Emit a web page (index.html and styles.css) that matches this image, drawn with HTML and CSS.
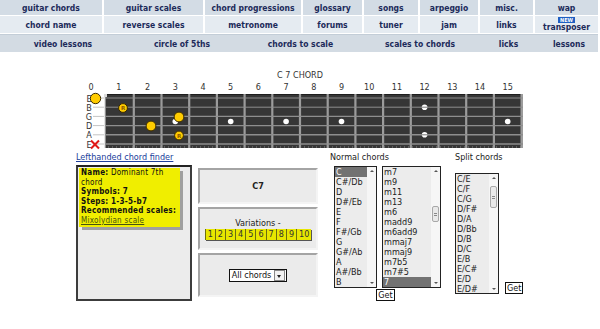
FILE: index.html
```html
<!DOCTYPE html>
<html lang="en">
<head>
    <meta charset="UTF-8">
    <meta name="viewport" content="width=device-width, initial-scale=1.0">
    <title>C 7 chord - chord finder</title>
    <link rel="stylesheet" href="styles.css">
</head>
<body>
    <div class="nav">
        <div class="nav-grid">
            <a href="#">guitar chords</a>
            <a href="#">guitar scales</a>
            <a href="#">chord progressions</a>
            <a href="#">glossary</a>
            <a href="#">songs</a>
            <a href="#">arpeggio</a>
            <a href="#">misc.</a>
            <a href="#">wap</a>
            <a href="#" class="r2">chord name</a>
            <a href="#" class="r2">reverse scales</a>
            <a href="#" class="r2">metronome</a>
            <a href="#" class="r2">forums</a>
            <a href="#" class="r2">tuner</a>
            <a href="#" class="r2">jam</a>
            <a href="#" class="r2">links</a>
            <a href="#" class="r2 stacked"><span class="new">NEW</span>transposer</a>
        </div>
        <div class="nav-row3">
            <a href="#">video lessons</a>
            <a href="#">circle of 5ths</a>
            <a href="#">chords to scale</a>
            <a href="#">scales to chords</a>
            <a href="#">licks</a>
            <a href="#">lessons</a>
        </div>
    </div>

    <div class="chord-title">C 7 CHORD</div>

    <svg class="fretboard" width="600" height="71" viewBox="0 0 600 71">
        <!-- fret numbers -->
        <g class="fret-num">
            <text x="91" y="8.5">0</text>
            <text x="118.9" y="8.5">1</text>
            <text x="147.6" y="8.5">2</text>
            <text x="175.3" y="8.5">3</text>
            <text x="203" y="8.5">4</text>
            <text x="230.7" y="8.5">5</text>
            <text x="258.4" y="8.5">6</text>
            <text x="286.1" y="8.5">7</text>
            <text x="313.8" y="8.5">8</text>
            <text x="341.5" y="8.5">9</text>
            <text x="369.2" y="8.5">10</text>
            <text x="396.9" y="8.5">11</text>
            <text x="424.6" y="8.5">12</text>
            <text x="452.3" y="8.5">13</text>
            <text x="480" y="8.5">14</text>
            <text x="507.7" y="8.5">15</text>
        </g>

        <!-- string names and leads -->
        <g class="string-name">
            <text x="89" y="20.5">E</text>
            <text x="89" y="29.7">B</text>
            <text x="89" y="38.9">G</text>
            <text x="89" y="48.1">D</text>
            <text x="89" y="57.3">A</text>
            <text x="89" y="66.5">E</text>
        </g>
        <g stroke="#c4c4c4" stroke-width="1">
            <line x1="93" y1="17" x2="104" y2="17"/>
            <line x1="93" y1="26.2" x2="104" y2="26.2"/>
            <line x1="93" y1="35.4" x2="104" y2="35.4"/>
            <line x1="93" y1="44.6" x2="104" y2="44.6"/>
            <line x1="93" y1="53.8" x2="104" y2="53.8"/>
            <line x1="93" y1="63" x2="104" y2="63"/>
        </g>

        <!-- board -->
        <rect x="104" y="13" width="419" height="54" fill="#363636"/>
        <line x1="104" y1="13.5" x2="523" y2="13.5" stroke="#1e1e1e"/>
        <line x1="104" y1="66" x2="523" y2="66" stroke="#8a8a8a" stroke-dasharray="1 3"/>
        <rect x="104" y="13" width="1.5" height="54" fill="#e4e4e4"/>
        <rect x="104" y="13" width="3" height="3" fill="#dcdcdc"/>

        <!-- frets -->
        <g fill="#9c9c9c">
            <rect x="132.7" y="13" width="2.2" height="54"/>
            <rect x="160.4" y="13" width="2.2" height="54"/>
            <rect x="188.1" y="13" width="2.2" height="54"/>
            <rect x="215.8" y="13" width="2.2" height="54"/>
            <rect x="243.5" y="13" width="2.2" height="54"/>
            <rect x="271.2" y="13" width="2.2" height="54"/>
            <rect x="298.9" y="13" width="2.2" height="54"/>
            <rect x="326.6" y="13" width="2.2" height="54"/>
            <rect x="354.3" y="13" width="2.2" height="54"/>
            <rect x="382" y="13" width="2.2" height="54"/>
            <rect x="409.7" y="13" width="2.2" height="54"/>
            <rect x="437.4" y="13" width="2.2" height="54"/>
            <rect x="465.1" y="13" width="2.2" height="54"/>
            <rect x="492.8" y="13" width="2.2" height="54"/>
            <rect x="520.5" y="13" width="2.5" height="54"/>
        </g>

        <!-- strings -->
        <g stroke="#8e8e8e">
            <line x1="105" y1="17" x2="523" y2="17" stroke-width="1"/>
            <line x1="105" y1="26.2" x2="523" y2="26.2" stroke-width="1"/>
            <line x1="105" y1="35.4" x2="523" y2="35.4" stroke-width="1.2"/>
            <line x1="105" y1="44.6" x2="523" y2="44.6" stroke-width="1.2"/>
            <line x1="105" y1="53.8" x2="523" y2="53.8" stroke-width="1.4"/>
            <line x1="105" y1="63" x2="523" y2="63" stroke-width="1.4"/>
        </g>

        <!-- inlays -->
        <g fill="#ffffff">
            <circle cx="175.3" cy="40.5" r="2.8"/>
            <circle cx="230.7" cy="40.5" r="2.8"/>
            <circle cx="286.1" cy="40.5" r="2.8"/>
            <circle cx="341.5" cy="40.5" r="2.8"/>
            <circle cx="424.6" cy="26.2" r="2.8"/>
            <circle cx="424.6" cy="53.8" r="2.8"/>
            <circle cx="507.7" cy="40.5" r="2.8"/>
        </g>
        <g stroke="#7a7a7a" stroke-width="1">
            <line x1="421" y1="26.2" x2="428" y2="26.2"/>
            <line x1="421" y1="53.8" x2="428" y2="53.8"/>
        </g>

        <!-- fingering -->
        <g class="finger">
            <circle cx="95.5" cy="17.5" r="5.2"/>
            <circle cx="123" cy="27" r="4.4"/>
            <circle cx="179" cy="36" r="4.9"/>
            <circle cx="151" cy="45" r="4.9"/>
            <circle cx="179" cy="54.5" r="4.4"/>
        </g>
        <g class="root">
            <text x="123" y="29">R</text>
            <text x="179" y="56.5">R</text>
        </g>
        <g stroke="#e01818" stroke-width="2">
            <line x1="91" y1="59.5" x2="99" y2="67.5"/>
            <line x1="99" y1="59.5" x2="91" y2="67.5"/>
        </g>
    </svg>

    <div class="finder">
        <div class="col-info">
            <a href="#" class="lefty">Lefthanded chord finder</a>
            <div class="info-box">
                <div class="note">
                    <b>Name:</b> Dominant 7th<br>
                    chord<br>
                    <b>Symbols: 7</b><br>
                    <b>Steps: 1-3-5-b7</b><br>
                    <b>Recommended scales:</b><br>
                    <a href="#">Mixolydian scale</a>
                </div>
            </div>
        </div>

        <div class="col-mid">
            <div class="panel panel-name">C7</div>
            <div class="panel panel-var">
                <div>Variations -</div>
                <div class="var-list">
                    <span>1</span><span>2</span><span>3</span><span>4</span><span>5</span><span>6</span><span>7</span><span>8</span><span>9</span><span>10</span>
                </div>
            </div>
            <div class="panel panel-filter">
                <span class="fake-select">All chords<span class="drop"></span></span>
            </div>
        </div>

        <div class="col-normal">
            <div class="label">Normal chords</div>
            <div class="lists">
                <div class="listbox root-list">
                    <div class="items">
                        <div class="sel">C</div>
                        <div>C#/Db</div>
                        <div>D</div>
                        <div>D#/Eb</div>
                        <div>E</div>
                        <div>F</div>
                        <div>F#/Gb</div>
                        <div>G</div>
                        <div>G#/Ab</div>
                        <div>A</div>
                        <div>A#/Bb</div>
                        <div>B</div>
                    </div>
                    <div class="sb"><span class="up"></span><span class="down"></span></div>
                </div>
                <div class="listbox type-list">
                    <div class="items">
                        <div>m7</div>
                        <div>m9</div>
                        <div>m11</div>
                        <div>m13</div>
                        <div>m6</div>
                        <div>madd9</div>
                        <div>m6add9</div>
                        <div>mmaj7</div>
                        <div>mmaj9</div>
                        <div>m7b5</div>
                        <div>m7#5</div>
                        <div class="sel">7</div>
                    </div>
                    <div class="sb"><span class="up"></span><span class="thumb thumb-mid"></span><span class="down"></span></div>
                </div>
            </div>
            <button class="get">Get</button>
        </div>

        <div class="col-split">
            <div class="label">Split chords</div>
            <div class="split-row">
                <div class="listbox split-list">
                    <div class="items">
                        <div>C/E</div>
                        <div>C/F</div>
                        <div>C/G</div>
                        <div>D/F#</div>
                        <div>D/A</div>
                        <div>D/Bb</div>
                        <div>D/B</div>
                        <div>D/C</div>
                        <div>E/B</div>
                        <div>E/C#</div>
                        <div>E/D</div>
                        <div>E/D#</div>
                    </div>
                    <div class="sb"><span class="up"></span><span class="thumb thumb-top"></span><span class="down"></span></div>
                </div>
                <button class="get">Get</button>
            </div>
        </div>
    </div>
</body>
</html>
```

FILE: styles.css
```css
body {
    margin: 0;
    background: #fff;
    color: #222;
    font-family: "DejaVu Sans Condensed", "DejaVu Sans", sans-serif;
    font-size: 9px;
}

/* top navigation */
.nav {
    width: 598px;
}
.nav a {
    color: #1c2a5a;
    font-weight: bold;
    font-size: 8.5px;
    text-decoration: none;
    display: flex;
    align-items: center;
    justify-content: center;
    white-space: nowrap;
}
.nav-grid {
    display: grid;
    grid-template-columns: 102px 99px 96px 59px 54px 58px 53px 63px;
    column-gap: 2px;
    row-gap: 1px;
}
.nav-grid a {
    height: 15px;
    background: #d3dce5;
}
.nav-grid a.r2 {
    height: 17px;
    background: #e5ebf1;
}
.nav-grid a.stacked {
    flex-direction: column;
    line-height: 9px;
}
.new {
    background: #1f5fc2;
    color: #fff;
    font-size: 5.5px;
    line-height: 6px;
    padding: 0 2px;
}
.nav-row3 {
    margin-top: 1px;
    display: grid;
    grid-template-columns: 126px 112px 125px 114px 63px 58px;
    background: #d3dbe3;
    border-top: 1px solid #c3cdd7;
}
.nav-row3 a {
    height: 17px;
}

/* fretboard */
.chord-title {
    margin-top: 18px;
    line-height: 11px;
    text-align: center;
    color: #333;
}
.fretboard {
    display: block;
}
.fret-num text,
.string-name text {
    font-family: "DejaVu Sans Condensed", "DejaVu Sans", sans-serif;
    font-size: 9px;
    fill: #333;
    text-anchor: middle;
}
.finger circle {
    fill: #ffcc00;
    stroke: #3a2a00;
    stroke-width: 1;
}
.root text {
    font-family: "DejaVu Sans", sans-serif;
    font-size: 5.5px;
    font-weight: bold;
    fill: #8a5a00;
    text-anchor: middle;
}

/* chord finder */
.finder {
    display: flex;
    align-items: flex-start;
}
.col-info {
    margin-left: 76px;
    width: 116px;
}
.lefty {
    display: block;
    line-height: 10px;
    color: #20409a;
}
.info-box {
    margin-top: 3px;
    height: 136px;
    box-sizing: border-box;
    border: 2px solid #3c3c3c;
    border-top-color: #222;
    background: #ececec;
    padding: 1px;
}
.note {
    width: 101px;
    box-sizing: border-box;
    background: #f0ee00;
    box-shadow: 3px 3px 0 #a0a0a0;
    padding: 0 0 2px 2px;
    font-size: 8px;
    line-height: 9.5px;
    letter-spacing: 0.25px;
    color: #111;
}
.note a {
    color: #47520e;
}

.col-mid {
    margin-left: 6px;
    width: 120px;
    padding-top: 16px;
}
.panel {
    box-sizing: border-box;
    background: #ebebeb;
    border: 2px solid #f4f4f4;
    border-top-color: #a4a4a4;
    border-left-color: #a4a4a4;
    display: flex;
    flex-direction: column;
    align-items: center;
    justify-content: center;
    margin-bottom: 3px;
}
.panel-name {
    height: 36px;
    font-weight: bold;
}
.panel-var {
    height: 43px;
    line-height: 10px;
}
.panel-filter {
    height: 44px;
}
.var-list {
    display: flex;
    margin-top: 1px;
    box-shadow: 1px 1px 0 #555;
}
.var-list span {
    background: #e8e600;
    border-left: 1px solid #6d6d10;
    padding: 0 2px;
    line-height: 11px;
    color: #333;
}
.fake-select {
    display: inline-flex;
    align-items: center;
    height: 13px;
    box-sizing: border-box;
    border: 1px solid #111;
    background: #fff;
    padding-left: 2px;
    color: #111;
}
.drop {
    width: 9px;
    height: 9px;
    margin: 0 1px 0 3px;
    border: 1px solid #888;
    background: #f2f2f2;
    position: relative;
}
.drop::after {
    content: "";
    position: absolute;
    left: 2px;
    top: 4px;
    border-left: 2.5px solid transparent;
    border-right: 2.5px solid transparent;
    border-top: 3px solid #222;
}

.col-normal {
    margin-left: 12px;
    display: flex;
    flex-direction: column;
    align-items: center;
}
.label {
    line-height: 10px;
    align-self: flex-start;
}
.lists {
    display: flex;
    gap: 5px;
    margin-top: 4px;
    padding-left: 4px;
}
.listbox {
    display: flex;
    box-sizing: border-box;
    border: 1px solid #222;
    background: #ececec;
    height: 122px;
}
.items {
    flex: 1;
    overflow: hidden;
}
.items div {
    height: 10px;
    line-height: 10px;
    padding-left: 1px;
    white-space: nowrap;
}
.items .sel {
    background: #727272;
    color: #fff;
}
.root-list {
    width: 43px;
}
.type-list {
    width: 59px;
}
.split-list {
    width: 44px;
    height: 121px;
}
.sb {
    width: 9px;
    background: #f6f6f6;
    display: flex;
    flex-direction: column;
    align-items: center;
}
.up,
.down {
    margin: 3px 0;
    border-left: 2px solid transparent;
    border-right: 2px solid transparent;
}
.up {
    border-bottom: 2px solid #555;
}
.down {
    margin-top: auto;
    border-top: 2px solid #555;
}
.thumb {
    width: 7px;
    box-sizing: border-box;
    border: 1px solid #a8a8a8;
    border-radius: 2px;
    background: #e9e9e9 repeating-linear-gradient(#e9e9e9 0 1px, #888 1px 2px) center / 3px 5px no-repeat;
}
.thumb-mid {
    height: 16px;
    margin-top: 31px;
}
.thumb-top {
    height: 22px;
    margin-top: 4px;
}
.get {
    margin-top: 1px;
    padding: 0 1px;
    height: 12px;
    border: 1px solid #111;
    background: #fff;
    font-family: inherit;
    font-size: 9px;
    line-height: 10px;
    color: #111;
}

.col-split {
    margin-left: 14px;
}
.split-row {
    display: flex;
    align-items: flex-end;
    margin-top: 11px;
}
.split-row .get {
    margin-left: 6px;
}
```
